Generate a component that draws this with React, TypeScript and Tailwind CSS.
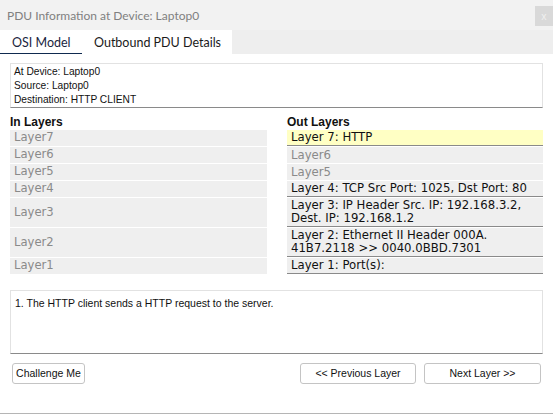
const inLayers = [
  { name: 'Layer7', tall: false },
  { name: 'Layer6', tall: false },
  { name: 'Layer5', tall: false },
  { name: 'Layer4', tall: false },
  { name: 'Layer3', tall: true },
  { name: 'Layer2', tall: true },
  { name: 'Layer1', tall: false },
];

const outLayers = [
  { text: ['Layer 7: HTTP'], active: true, selected: true },
  { text: ['Layer6'], active: false },
  { text: ['Layer5'], active: false },
  { text: ['Layer 4: TCP Src Port: 1025, Dst Port: 80'], active: true },
  { text: ['Layer 3: IP Header Src. IP: 192.168.3.2,', 'Dest. IP: 192.168.1.2'], active: true },
  { text: ['Layer 2: Ethernet II Header 000A.', '41B7.2118 >> 0040.0BBD.7301'], active: true },
  { text: ['Layer 1: Port(s):'], active: true },
];

const uiFont = "font-['Lato','Liberation_Sans',sans-serif]";
const rowFont = "font-['DejaVu_Sans','Verdana',sans-serif]";
const arial = "font-['Liberation_Sans','Arial',sans-serif]";

export default function App() {
  return (
    <div className="w-[553px] h-[414px] bg-white flex flex-col overflow-hidden border-b border-[#b5b5b5]">
      {/* Title bar */}
      <div className="h-[30px] bg-[#f2f2f2] flex items-start justify-between">
        <span className={`${uiFont} text-[12px] text-[#808080] pl-[7px] pt-[7px]`}>
          PDU Information at Device: Laptop0
        </span>
        <div className="mt-[6px] w-[18px] h-[20px] bg-[#d9d9d9] flex items-center justify-center text-[10px] text-[#f0f0f0]">
          x
        </div>
      </div>

      {/* Tabs */}
      <div className="h-[24px] bg-[#eeeeee] flex">
        <div className="flex bg-white w-[232px]">
          <div className="w-[82px] flex flex-col">
            <span className={`${uiFont} text-[12.5px] text-[#1a2540] pl-[12px] pt-[4px] flex-1`}>OSI Model</span>
            <div className="h-[4px] bg-[#0f2a4f]" />
          </div>
          <span className={`${uiFont} text-[12.5px] text-[#1a1a1a] pl-[12px] pt-[4px]`}>Outbound PDU Details</span>
        </div>
      </div>

      <div className="flex flex-col px-[10px]">
        {/* Info box */}
        <div className={`${arial} mt-[9px] h-[45px] border border-[#e2e2e2] border-b-[#8a8a8a] px-[3px] pt-[1px] text-[10.2px] leading-[14px] text-[#111]`}>
          <div>At Device: Laptop0</div>
          <div>Source: Laptop0</div>
          <div>Destination: HTTP CLIENT</div>
        </div>

        {/* Layers */}
        <div className="flex gap-[20px] mt-[7px]">
          <div className="w-[257px] flex flex-col">
            <div className={`${arial} font-bold text-[12px] leading-[15px] text-[#111]`}>In Layers</div>
            <div className="flex flex-col gap-[1px]">
              {inLayers.map((l) => (
                <div
                  key={l.name}
                  className={`${rowFont} bg-[#efefef] text-[#8a8a8a] text-[11.6px] pl-[4px] flex items-center ${l.tall ? 'h-[29px]' : 'h-[16px]'}`}
                >
                  {l.name}
                </div>
              ))}
            </div>
          </div>
          <div className="w-[256px] flex flex-col">
            <div className={`${arial} font-bold text-[12px] leading-[15px] text-[#111]`}>Out Layers</div>
            <div className="flex flex-col gap-[1px]">
              {outLayers.map((l, i) => (
                <div
                  key={i}
                  className={`${rowFont} text-[11.7px] pl-[4px] flex flex-col leading-[13px] ${
                    l.text.length > 1 ? 'h-[29px] pt-[1px]' : 'h-[16px] justify-center'
                  } ${l.selected ? 'bg-[#ffffc4]' : 'bg-[#efefef]'} ${
                    l.active ? 'text-[#111] border-b border-[#8a8a8a]' : 'text-[#8a8a8a]'
                  }`}
                >
                  {l.text.map((t) => (
                    <span key={t} className="whitespace-nowrap">{t}</span>
                  ))}
                </div>
              ))}
            </div>
          </div>
        </div>

        {/* Description */}
        <div className={`${arial} mt-[16px] h-[64px] w-[533px] border border-[#e2e2e2] border-b-[#8a8a8a] px-[4px] pt-[5px] text-[10.5px] text-[#111]`}>
          1. The HTTP client sends a HTTP request to the server.
        </div>

        {/* Buttons */}
        <div className="flex items-center mt-[9px] pl-[2px] w-[531px]">
          <button className={`${arial} h-[21px] w-[73px] border border-[#c4c4c4] rounded-[3px] bg-white text-[10.5px] text-[#111]`}>
            Challenge Me
          </button>
          <div className="flex-1" />
          <button className={`${arial} h-[21px] w-[116px] border border-[#c4c4c4] rounded-[3px] bg-white text-[10.5px] text-[#111]`}>
            &lt;&lt; Previous Layer
          </button>
          <button className={`${arial} ml-[8px] h-[21px] w-[117px] border border-[#c4c4c4] rounded-[3px] bg-white text-[10.5px] text-[#111]`}>
            Next Layer &gt;&gt;
          </button>
        </div>
      </div>
    </div>
  );
}
